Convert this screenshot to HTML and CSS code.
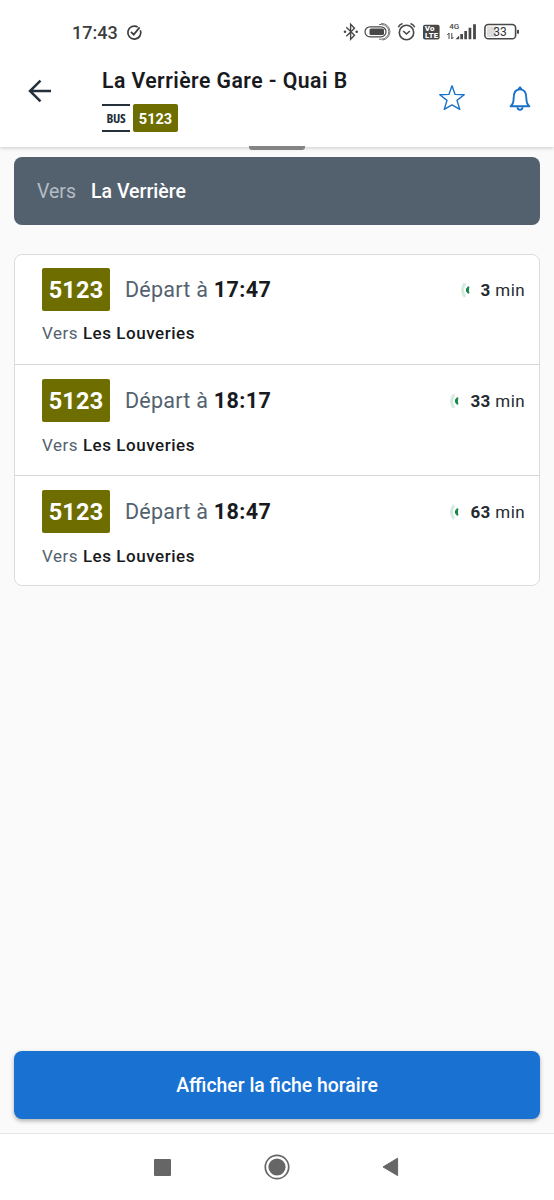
FILE: index.html
```html
<!DOCTYPE html>
<html lang="fr">
<head>
<meta charset="utf-8">
<title>La Verrière Gare - Quai B</title>
<link rel="stylesheet" href="styles.css">
</head>
<body>
<div class="screen">
  <header class="header">
    <div class="status">
      <span class="clock">17:43</span>
      <svg class="check" width="17" height="17" viewBox="0 0 17 17" fill="none" stroke="#3c3c3c" stroke-width="1.7"><path d="M14.4 6.2A6.5 6.5 0 1 1 11.7 3"/><path d="M5 7.8l2.7 2.8L13.6 3.4"/></svg>
      <svg class="tray" width="178" height="24" viewBox="342 20 178 24" fill="none" stroke="#484848">
        <path d="M346.3 27.3l8.2 8-3.9 4V24.2l3.9 4-8.2 8" stroke-width="1.4"/>
        <circle cx="345" cy="31.8" r="1.3" fill="#484848" stroke="none"/><circle cx="356.7" cy="31.8" r="1.3" fill="#484848" stroke="none"/>
        <rect x="365" y="26.8" width="21" height="10" rx="5" stroke-width="1.2"/>
        <rect x="369.5" y="28.5" width="14.5" height="6.6" rx="1.5" fill="#484848" stroke="none"/>
        <path d="M379 24.5h2.5a7.3 7.3 0 0 1 0 14.7H379" stroke-width=".8"/><path d="M381 23.4a8.3 8.3 0 0 1 1.2 16.7" stroke-width=".7"/>
        <circle cx="406.5" cy="32.5" r="7.2" stroke-width="1.6"/><path d="M403.2 31l3.3 3 3.3-3M398.3 27.3q1-2.7 4.2-3.8M414.7 27.3q-1-2.7-4.2-3.8" stroke-width="1.6"/>
        <rect x="423" y="24.7" width="16.6" height="14.8" rx="2" fill="#484848" stroke="none"/>
        <g fill="#fff" stroke="none" font-family="Roboto, sans-serif" font-weight="900"><text x="424.8" y="31.4" font-size="8">Vo</text><text x="425" y="38.4" font-size="7.6" textLength="13">LTE</text></g>
        <text x="449.3" y="29.2" font-family="Roboto, sans-serif" font-size="8" font-weight="500" fill="#484848" stroke="none">4G</text>
        <path d="M449 39v-6l-1.7 2M451.8 33v6l1.6-2" stroke-width="1"/>
        <path d="M455.5 39.2l3.7-3.6v3.6zM460.3 39.2v-5.3h2.7v5.3zM464.3 39.2v-8.2h2.7v8.2zM468.6 39.2v-11.4h2.7v11.4zM473.1 39.2V24.3h2.8v14.9z" fill="#484848" stroke="none"/>
        <rect x="487" y="26.5" width="9" height="10.5" fill="#ddd" stroke="none"/>
        <rect x="484.9" y="24.5" width="30.7" height="14.3" rx="3.4" stroke-width="1.6"/>
        <rect x="517" y="29.8" width="2" height="4" rx=".7" fill="#484848" stroke="none"/>
        <text x="493.2" y="36" font-family="Roboto, sans-serif" font-size="12" fill="#333" stroke="none">33</text>
      </svg>
    </div>
    <div class="toolbar">
      <svg class="back" width="24" height="24" viewBox="0 0 24 24" fill="none" stroke="#24303c" stroke-width="2.5"><path d="M23 12H2M12.5 1.6L2 12l10.5 10.4"/></svg>
      <div class="heading">
        <h1 class="title">La Verrière Gare - Quai B</h1>
        <div class="lines"><span class="mode">BUS</span><span class="badge badge-small"><span class="number">5123</span></span></div>
      </div>
      <svg class="star" width="28" height="28" viewBox="0 0 28 28" fill="none" stroke="#1971c9" stroke-width="1.4" stroke-linejoin="round"><path d="M14 1.8l3.1 8.6 9.1.3-7.2 5.7 2.8 9-7.8-4.5-7.8 4.5 2.8-9-7.2-5.7 9.1-.3z"/></svg>
      <svg class="bell" width="24" height="28" viewBox="0 0 24 28" fill="none" stroke="#1971c9" stroke-width="1.9" stroke-linejoin="round"><path d="M2.6 21.2c2.4-2 3-3.9 3-7.5 0-5.9 1.6-9.3 6.4-9.3s6.4 3.4 6.4 9.3c0 3.6.6 5.5 3 7.5z"/><path d="M10.7 3.8l1.3-1.5 1.3 1.5z" fill="#1971c9"/><path d="M9.5 22.3a2.5 2.5 0 0 0 5 0"/></svg>
    </div>
    <span class="handle"></span>
  </header>
  <main class="content">
    <div class="direction"><span class="direction-label">Vers</span><span class="direction-name">La Verrière</span></div>
    <ul class="departures">
      <li class="departure">
        <div class="main-row"><span class="badge"><span class="number">5123</span></span><span class="leave">Départ à <b>17:47</b></span>
          <span class="wait"><svg class="live" width="12" height="18" viewBox="0 0 12 18"><path d="M5 2.3Q0 9 5 15.8" fill="none" stroke="#d3eadc" stroke-width="2.8"/><path d="M8.9 5.8C5.6 5.8 5.6 12.2 8.9 12.2Q7.9 9 8.9 5.8z" fill="#16874b" stroke="#16874b"/></svg><span class="minutes"><b>3</b> min</span></span></div>
        <p class="terminus">Vers <b>Les Louveries</b></p>
      </li>
      <li class="departure">
        <div class="main-row"><span class="badge"><span class="number">5123</span></span><span class="leave">Départ à <b>18:17</b></span>
          <span class="wait"><svg class="live" width="12" height="18" viewBox="0 0 12 18"><path d="M5 2.3Q0 9 5 15.8" fill="none" stroke="#d3eadc" stroke-width="2.8"/><path d="M8.9 5.8C5.6 5.8 5.6 12.2 8.9 12.2Q7.9 9 8.9 5.8z" fill="#16874b" stroke="#16874b"/></svg><span class="minutes"><b>33</b> min</span></span></div>
        <p class="terminus">Vers <b>Les Louveries</b></p>
      </li>
      <li class="departure">
        <div class="main-row"><span class="badge"><span class="number">5123</span></span><span class="leave">Départ à <b>18:47</b></span>
          <span class="wait"><svg class="live" width="12" height="18" viewBox="0 0 12 18"><path d="M5 2.3Q0 9 5 15.8" fill="none" stroke="#d3eadc" stroke-width="2.8"/><path d="M8.9 5.8C5.6 5.8 5.6 12.2 8.9 12.2Q7.9 9 8.9 5.8z" fill="#16874b" stroke="#16874b"/></svg><span class="minutes"><b>63</b> min</span></span></div>
        <p class="terminus">Vers <b>Les Louveries</b></p>
      </li>
    </ul>
    <button class="timetable">Afficher la fiche horaire</button>
  </main>
  <nav class="system-nav">
    <svg width="17" height="17" viewBox="0 0 17 17"><rect width="17" height="17" rx="1" fill="#666"/></svg>
    <svg width="26" height="26" viewBox="0 0 26 26"><circle cx="13" cy="13" r="11.7" fill="none" stroke="#666" stroke-width="1.7"/><circle cx="13" cy="13" r="8.6" fill="#666"/></svg>
    <svg width="17" height="20" viewBox="0 0 17 20"><path d="M15.6 1.2v17.4L1 9.9z" fill="#666" stroke="#666" stroke-linejoin="round"/></svg>
  </nav>
</div>
</body>
</html>
```

FILE: styles.css
```css
* { box-sizing: border-box; }
body { margin: 0; font-family: Roboto, sans-serif; color: #181a1d; }
b { font-weight: 700; }
svg { display: block; flex: none; }
.screen { display: flex; flex-direction: column; width: 554px; height: 1200px; background: #fafafa; }
.header { position: relative; flex: none; height: 147px; background: #fff; box-shadow: 0 1px 4px rgba(0, 0, 0, .2); }
.status { display: flex; align-items: center; height: 64px; padding: 0 34px 0 72px; }
.clock { width: 46px; font-size: 18px; font-weight: 500; color: #3c3c3c; }
.check { margin-left: 8px; }
.tray { margin-left: auto; }
.toolbar { display: flex; align-items: flex-start; padding-left: 28px; }
.back { margin-top: 15px; }
.heading { width: 386px; padding-left: 50px; }
.title { margin: 4px 0 0; font-size: 21.2px; line-height: 26px; font-weight: 600; letter-spacing: .46px; white-space: nowrap; }
.lines { display: flex; gap: 3px; margin-top: 10px; }
.mode { width: 28px; height: 28px; border: solid #25303b; border-width: 2px 0; color: #25303b; font: 700 13px/24px "Open Sans", sans-serif; font-stretch: 75%; letter-spacing: -.3px; text-align: center; }
.badge { display: flex; align-items: center; justify-content: center; width: 68px; height: 43px; border-radius: 2px; background: #6e6e00; color: #fff; font-size: 23.5px; font-weight: 700; letter-spacing: .2px; }
.badge-small { width: 45px; height: 28px; font-size: 14.5px; letter-spacing: 0; padding-top: 3px; }
.star { margin-top: 20px; }
.bell { margin: 21px 0 0 42px; }
.handle { position: absolute; left: 249px; bottom: -3px; width: 56px; height: 4px; border-radius: 0 0 3px 3px; background: #848484; }
.content { flex: 1; display: flex; flex-direction: column; padding: 10px 14px 14px; }
.direction { display: flex; align-items: center; gap: 15px; height: 68px; padding: 1px 0 0 23px; border-radius: 8px; background: #53616e; font-size: 19.5px; font-weight: 500; }
.direction-label { color: #b4bdc5; font-weight: 400; }
.direction-name { color: #fff; }
.departures { list-style: none; margin: 29px 0 0; padding: 0; border: 1px solid #dcdcdc; border-radius: 8px; background: #fff; }
.departure { height: 110px; padding: 13px 14px 0 27px; border-bottom: 1px solid #d8d8d8; }
.departure + .departure { height: 111px; padding-top: 14px; }
.departure:last-child { height: 109px; border-bottom: 0; }
.main-row { display: flex; align-items: center; }
.leave { margin-left: 15px; color: #53616e; font-size: 21.5px; letter-spacing: .25px; }
.leave b { color: #181a1d; letter-spacing: .4px; }
.wait { display: flex; align-items: center; gap: 9px; margin-left: auto; font-size: 17px; letter-spacing: .4px; color: #252a30; }
.terminus { margin: 12px 0 0; color: #53616e; font-size: 17px; line-height: 20px; letter-spacing: .53px; }
.departure + .departure .terminus { margin-top: 13px; }
.terminus b { color: #181a1d; font-weight: 500; }
.timetable { height: 68px; margin-top: auto; border: 0; border-radius: 8px; background: #1971d2; box-shadow: 0 2px 4px rgba(0, 0, 0, .3); color: #fff; font: 500 19.4px Roboto, sans-serif; }
.system-nav { flex: none; display: flex; align-items: center; justify-content: space-between; height: 67px; padding: 0 155px 0 154px; border-top: 1px solid #e3e6ea; background: #fff; }
```
